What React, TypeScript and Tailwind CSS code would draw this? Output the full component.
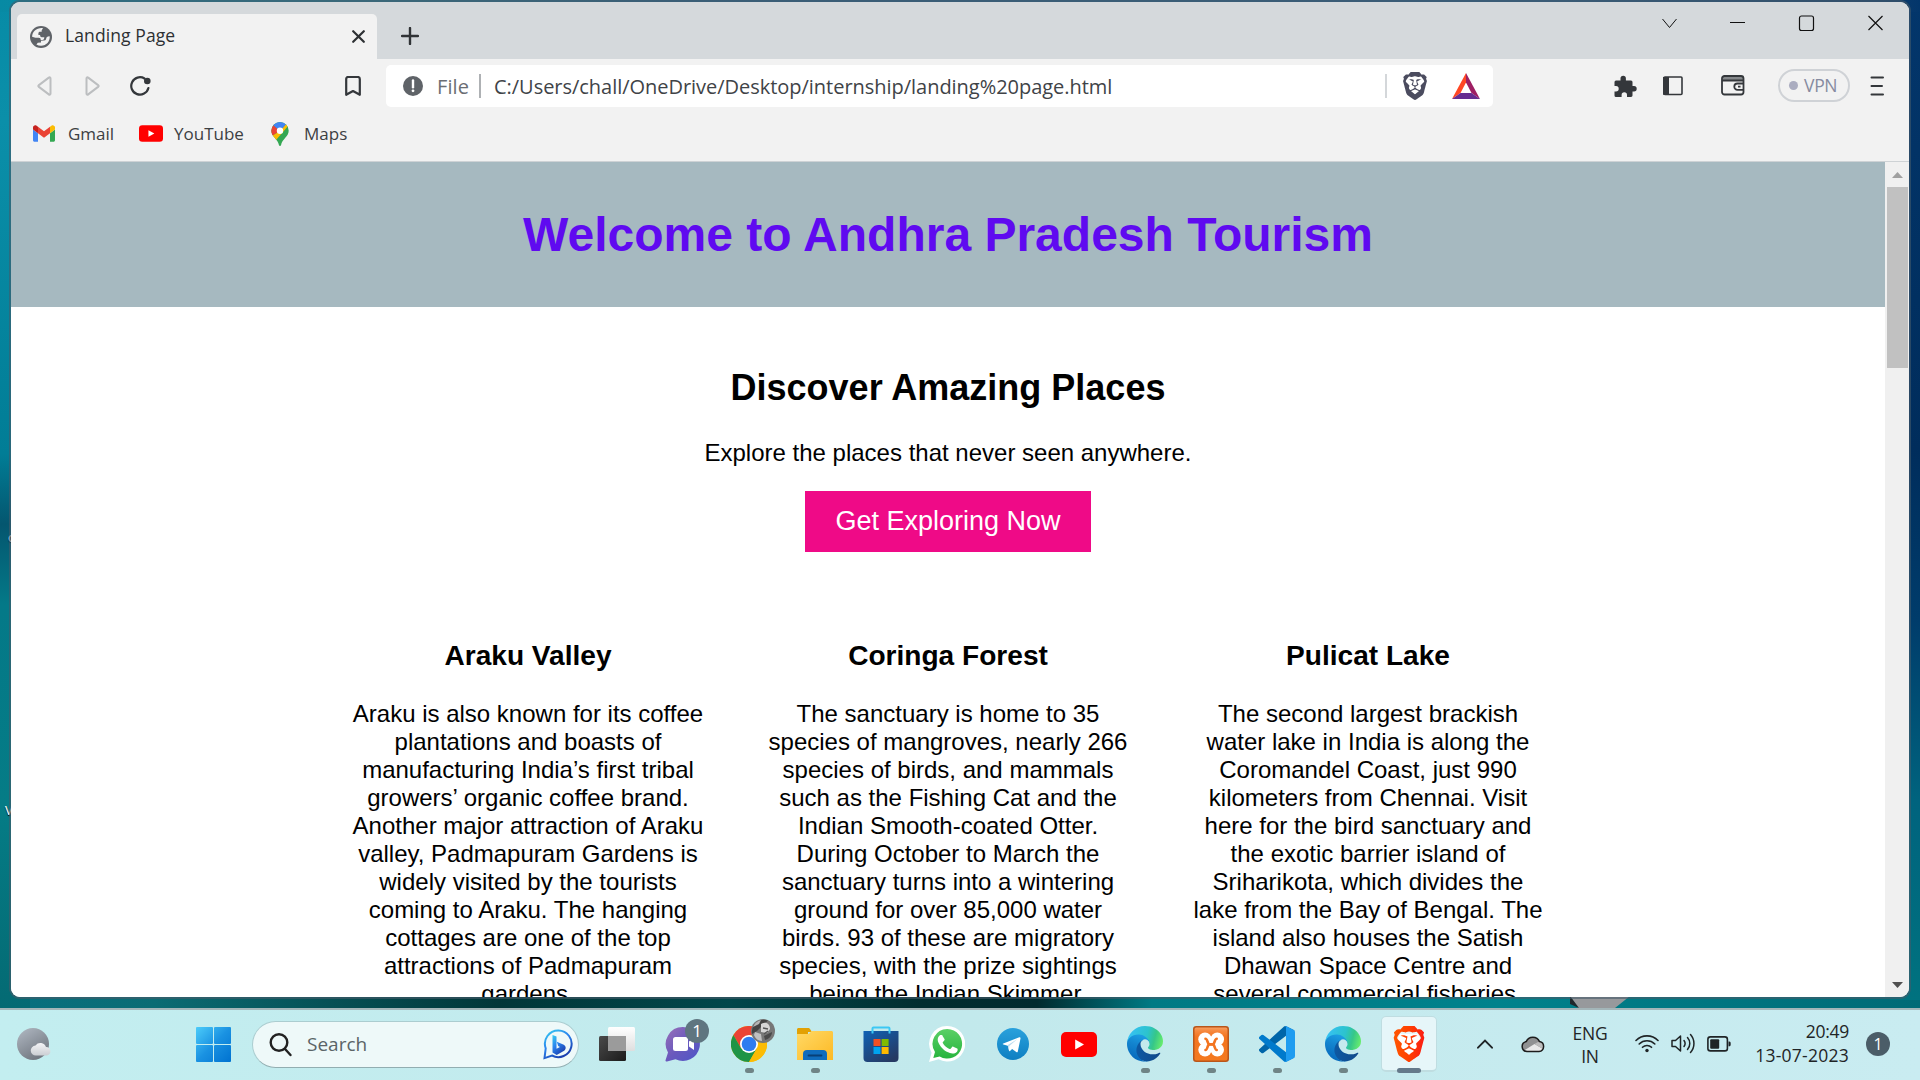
import React from "react";
import { SiBrave } from "react-icons/si";

const ui = "font-['Open_Sans','Noto_Sans',sans-serif]";

function Globe() {
  return (
    <svg width="22" height="22" viewBox="0 0 22 22">
      <circle cx="11" cy="11" r="11" fill="#5f6368" />
      <path d="M13 2.200C7 1.500 2.200 5.500 2.100 10.800l3.400 1h3.200c1.600 0 2 .8 2 2.200h1.600c1.500 0 2-1.200 2-2.700h-2.600c-1.200 0-1.600-.9-1.600-2.200H8.400V7.400c0-1 .6-1.700 1.700-1.700h1.600V4.200z" fill="#f2f2f2" />
      <path d="M19.700 10.200c.5 5-3.400 9.500-8.600 9.600-1.800 0-3.300-.4-4.700-1.200l1.400-1.900 3.200-.2v-1.800l3.300-.3c1.600-.2 2-1.200 2-2.700l1.500-1.200z" fill="#f2f2f2" />
    </svg>
  );
}

function Bat() {
  return (
    <svg width="28" height="26" viewBox="0 0 28 26">
      <path d="M14 0v9.500L8.500 20 0 26z" fill="#ff4724" />
      <path d="M14 0l14 26-8.500-6L14 9.500z" fill="#9e1f63" />
      <path d="M0 26l8.500-6h11l8.500 6z" fill="#662d91" />
    </svg>
  );
}

function Gmail() {
  return (
    <svg width="22" height="17" viewBox="52 42 88 66">
      <path fill="#4285f4" d="M58 108h14V74L52 59v43c0 3.320 2.690 6 6 6" />
      <path fill="#34a853" d="M120 108h14c3.320 0 6-2.690 6-6V59l-20 15" />
      <path fill="#fbbc04" d="M120 48v26l20-15v-8c0-7.420-8.470-11.650-14.400-7.200" />
      <path fill="#ea4335" d="M72 74V48l24 18 24-18v26L96 92" />
      <path fill="#c5221f" d="M52 51v8l20 15V48l-5.600-4.200c-5.940-4.450-14.400-.220-14.400 7.200" />
    </svg>
  );
}

function YouTube({ w, h }: { w: number; h: number }) {
  return (
    <svg width={w} height={h} viewBox="0 0 36 25">
      <rect width="36" height="25" rx="5" fill="#f00" />
      <path d="M14.200 7.500v10l8.800-5z" fill="#fff" />
    </svg>
  );
}

function MapsPin() {
  return (
    <svg width="18" height="24" viewBox="0 0 18 24">
      <defs>
        <clipPath id="pin">
          <path d="M9 0a8.700 8.700 0 0 1 8.700 8.700c0 6-6.500 8-7.700 14.500-.2 1-1.800 1-2 0C6.800 16.700.3 14.700.3 8.700A8.700 8.700 0 0 1 9 0z" />
        </clipPath>
      </defs>
      <g clipPath="url(#pin)">
        <rect width="18" height="24" fill="#34a853" />
        <path d="M9 9L2.500 3-2 10l3 4z" fill="#ea4335" />
        <path d="M9 9L1 14l3.200 5L17.500 3.500 15 2z" fill="#fbbc04" />
        <path d="M9 9l8-9H6L2 3z" fill="#4285f4" />
      </g>
      <circle cx="9" cy="8.700" r="3.200" fill="#fff" />
    </svg>
  );
}

function Edge({ id }: { id: string }) {
  return (
    <svg width="36" height="36" viewBox="0 0 256 256">
      <defs>
        <linearGradient id={id + "a"} x1="60" y1="180" x2="230" y2="180" gradientUnits="userSpaceOnUse">
          <stop offset="0" stopColor="#0c59a4" />
          <stop offset="1" stopColor="#114a8b" />
        </linearGradient>
        <linearGradient id={id + "b"} x1="110" y1="70" x2="50" y2="240" gradientUnits="userSpaceOnUse">
          <stop offset="0" stopColor="#1b9de2" />
          <stop offset=".4" stopColor="#1384cf" />
          <stop offset="1" stopColor="#0669bc" />
        </linearGradient>
        <linearGradient id={id + "c"} x1="20" y1="60" x2="250" y2="120" gradientUnits="userSpaceOnUse">
          <stop offset="0" stopColor="#35c1f1" />
          <stop offset=".5" stopColor="#2cc3cd" />
          <stop offset=".75" stopColor="#36c788" />
          <stop offset="1" stopColor="#66eb6e" />
        </linearGradient>
      </defs>
      <path fill={"url(#" + id + "a)"} d="M230.600 190.500c-3.400 1.800-6.900 3.400-10.500 4.700a101.900 101.900 0 0 1-35.800 6.400c-47.200 0-88.300-32.500-88.300-74.100 0-11.900 6.500-22.900 16.800-28.600-42.700 1.800-53.700 46.300-53.700 72.400 0 73.900 68 81.300 82.700 81.300 7.900 0 19.800-2.300 27-4.600l1.300-.4a128.300 128.300 0 0 0 66.600-52.800 4 4 0 0 0-6.100-4.300z" />
      <path fill={"url(#" + id + "b)"} d="M105.700 241.400a79.200 79.200 0 0 1-22.700-21.300 80.700 80.700 0 0 1 29.800-121.300c3.100-1.500 8.500-4.100 15.600-4a32.400 32.400 0 0 1 25.700 13 31.900 31.900 0 0 1 6.300 18.700c0-.2 24.500-79.700-80-79.700C36.500 46.800 0 88.500 0 125c-.2 19.300 4 38.500 12.200 56a128 128 0 0 0 156.400 67.100 75.500 75.500 0 0 1-62.800-6.600z" />
      <path fill={"url(#" + id + "c)"} d="M152.300 148.900c-.8 1-3.300 2.500-3.300 5.700 0 2.600 1.700 5.100 4.700 7.200 14.400 10 41.500 8.600 41.500 8.600 10.700 0 21.200-2.900 30.300-8.300A61.400 61.400 0 0 0 256 109.200c.3-22.400-8-37.300-11.300-43.900C223.500 23.900 177.700 0 128 0A128 128 0 0 0 0 126.200c.5-36.500 36.800-66 80-66 3.500 0 23.500.3 42 10.100 16.300 8.500 24.900 18.900 30.800 29.200 6.200 10.700 7.300 24.100 7.300 29.500 0 5.300-2.700 13.300-7.800 19.900z" />
    </svg>
  );
}

function TaskView() {
  return (
    <svg width="36" height="36" viewBox="0 0 36 36">
      <defs>
        <linearGradient id="tv1" x2="1" y2="1"><stop stopColor="#4a4a4a" /><stop offset="1" stopColor="#1b1b1b" /></linearGradient>
        <linearGradient id="tv2" y2="1" x2="0"><stop stopColor="#fff" /><stop offset="1" stopColor="#dedede" /></linearGradient>
      </defs>
      <rect x="0" y="10" width="27" height="25" rx="1.500" fill="url(#tv1)" />
      <rect x="9" y="1" width="27" height="24" rx="1.500" fill="url(#tv2)" />
      <rect x="9" y="10" width="18" height="15" fill="#9b9b9b" />
    </svg>
  );
}

function Chat() {
  return (
    <svg width="36" height="36" viewBox="0 0 36 36">
      <defs><linearGradient id="chat" x2="1" y2="1"><stop stopColor="#9a70b8" /><stop offset=".5" stopColor="#6a59bd" /><stop offset="1" stopColor="#4d55c8" /></linearGradient></defs>
      <path d="M18 1a17 17 0 1 1-7.500 32.300L2 35.500c-1 .2-1.800-.6-1.400-1.600L3 26.500A17 17 0 0 1 18 1z" fill="url(#chat)" />
      <rect x="8" y="11" width="15" height="14" rx="2.500" fill="#fff" />
      <path d="M24 15.500l5-3.500v12l-5-3.500z" fill="#fff" />
    </svg>
  );
}

function Chrome() {
  return (
    <svg width="36" height="36" viewBox="0 0 36 36">
      <circle cx="18" cy="18" r="18" fill="#fbbc05" />
      <path d="M18 18L33.600 9A18 18 0 0 0 2.400 9l7.800 13.500z" fill="#ea4335" />
      <path d="M2.400 9A18 18 0 0 0 18 36l7.800-13.500H10.200z" fill="#1e9446" />
      <path d="M18 9h15.600A18 18 0 0 1 18 36l7.800-13.500z" fill="#fbbc05" />
      <circle cx="18" cy="18" r="9" fill="#fff" />
      <circle cx="18" cy="18" r="7.300" fill="#2e7cf0" />
    </svg>
  );
}

function Folder() {
  return (
    <svg width="36" height="34" viewBox="0 0 36 34">
      <defs><linearGradient id="fold" x2="1" y2="1"><stop stopColor="#ffd966" /><stop offset="1" stopColor="#fdb924" /></linearGradient></defs>
      <path d="M0 2.500C0 1.700.7 1 1.500 1H11c1 0 1.500.4 2 1l2 3h-4v6H0z" fill="#e2a105" />
      <path d="M0 7h10.500c1 0 1.500-.3 2-.8L14.500 4h20c.8 0 1.500.7 1.500 1.500V33H0z" fill="url(#fold)" />
      <path d="M6 33v-6a4 4 0 0 1 4-4h16a4 4 0 0 1 4 4v6z" fill="#0f6cbd" />
      <path d="M11.500 28.500h13" stroke="#083f77" strokeWidth="1.800" strokeLinecap="round" />
    </svg>
  );
}

function Store() {
  return (
    <svg width="36" height="36" viewBox="0 0 36 36">
      <defs><linearGradient id="store" x2=".7" y2="1"><stop stopColor="#0f62b5" /><stop offset="1" stopColor="#263a63" /></linearGradient></defs>
      <path d="M.5 5H35.500v27a4 4 0 0 1-4 4h-27a4 4 0 0 1-4-4z" fill="url(#store)" />
      <path d="M9.500 7.500V2.500a1 1 0 0 1 1-1h15a1 1 0 0 1 1 1v5" fill="none" stroke="#3cc8f4" strokeWidth="2" />
      <rect x="10.500" y="13" width="7" height="7" fill="#f25022" />
      <rect x="18.600" y="13" width="7" height="7" fill="#7fba00" />
      <rect x="10.500" y="21" width="7" height="7" fill="#00a4ef" />
      <rect x="18.600" y="21" width="7" height="7" fill="#ffb900" />
    </svg>
  );
}

function WhatsApp() {
  return (
    <svg width="36" height="36" viewBox="0 0 36 36">
      <defs><linearGradient id="wa" x2="0" y2="1"><stop stopColor="#5bd066" /><stop offset="1" stopColor="#27b43e" /></linearGradient></defs>
      <path d="M18.200 0A17.800 17.800 0 1 1 9.600 33.300L0 36l2.600-9.300A17.800 17.800 0 0 1 18.200 0z" fill="#fff" />
      <path d="M18.200 3A14.800 14.800 0 1 1 10.700 30.500L4.300 32.100 6 25.900A14.800 14.800 0 0 1 18.200 3z" fill="url(#wa)" />
      <path d="M13.600 9.900c-.3-.8-.7-.8-1-.8h-.9c-.3 0-.9.100-1.300.6-.5.500-1.700 1.700-1.700 4.100s1.800 4.800 2 5.100c.2.3 3.400 5.400 8.400 7.400 4.100 1.600 5 1.300 5.900 1.200.9-.1 2.900-1.200 3.300-2.300.4-1.100.4-2.100.3-2.300-.1-.2-.5-.3-1-.6l-3.300-1.600c-.5-.2-.8-.2-1.200.2l-1.500 1.900c-.3.3-.6.4-1 .1-.5-.2-2.100-.8-4-2.500-1.500-1.300-2.500-2.900-2.800-3.400-.3-.5 0-.8.200-1l1.600-1.900c.1-.3.100-.6 0-.9z" fill="#fff" />
    </svg>
  );
}

function Telegram() {
  return (
    <svg width="32" height="32" viewBox="0 0 32 32">
      <defs><linearGradient id="tg" x2="0" y2="1"><stop stopColor="#2aa1dc" /><stop offset="1" stopColor="#0e7fc2" /></linearGradient></defs>
      <circle cx="16" cy="16" r="16" fill="url(#tg)" />
      <path d="M6.300 15.600l16-6.300c.8-.3 1.400.2 1.200 1.200l-2.700 12.900c-.2.900-.8 1.200-1.500.7l-4.200-3.100-2.100 2c-.4.400-.8.200-.9-.2l-1.300-5-4.400-1.300c-.9-.3-.9-.7-.1-.9z" fill="#fff" />
      <path d="M12 22.700l.3-4.600 8.200-7.200-9.700 6.200z" fill="#bcdcf0" />
    </svg>
  );
}

function Xampp() {
  return (
    <svg width="36" height="36" viewBox="0 0 36 36">
      <defs><linearGradient id="xa" x2="0" y2="1"><stop stopColor="#f9a468" /><stop offset=".12" stopColor="#f6883e" /><stop offset=".3" stopColor="#f3741f" /><stop offset="1" stopColor="#f47a20" /></linearGradient></defs>
      <rect x=".75" y=".75" width="34.500" height="34.500" rx="2.500" fill="url(#xa)" stroke="#b9561b" strokeWidth="1.500" />
      <g fill="#fff">
        <circle cx="12" cy="13.300" r="6.700" />
        <circle cx="24.300" cy="13.300" r="6.700" />
        <circle cx="12" cy="23.700" r="6.700" />
        <circle cx="24.300" cy="23.700" r="6.700" />
        <rect x="10" y="13" width="16.500" height="11" />
      </g>
      <g fill="none" stroke="#f3741f" strokeWidth="2.600" strokeLinecap="round">
        <path d="M12.500 12.800c2.200 0 1.800 5.400 4 5.400h3.200c2.200 0 1.800-5.400 4-5.400" />
        <path d="M12.500 24c2.200 0 1.800-5.600 4-5.600h3.200c2.200 0 1.800 5.600 4 5.600" />
      </g>
    </svg>
  );
}

function VSCode() {
  return (
    <svg width="36" height="36" viewBox="0 0 100 100">
      <path d="M96.500 10.800L75.900.9a6.200 6.200 0 0 0-7.100 1.200L1.300 63.600a4.200 4.200 0 0 0 0 6.200l5.500 5a4.200 4.200 0 0 0 5.300.2L93.400 13.400c2.700-2.100 6.600-.1 6.600 3.300v-.3a6.200 6.200 0 0 0-3.500-5.600z" fill="#0065a9" />
      <path d="M96.500 89.200l-20.600 9.900a6.200 6.200 0 0 1-7.100-1.200L1.300 36.400a4.200 4.200 0 0 1 0-6.200l5.500-5a4.200 4.200 0 0 1 5.300-.2l81.300 61.600c2.700 2.100 6.600.1 6.600-3.300v.3a6.200 6.200 0 0 1-3.500 5.600z" fill="#007acc" />
      <path d="M75.900 99.100a6.200 6.200 0 0 1-7.100-1.200c2.300 2.300 6.200.7 6.200-2.600V4.700c0-3.300-3.900-4.900-6.200-2.600A6.200 6.200 0 0 1 75.900.9l20.600 9.900a6.200 6.200 0 0 1 3.500 5.600v67.200a6.200 6.200 0 0 1-3.500 5.600z" fill="#1f9cf0" />
    </svg>
  );
}

function Cell({ children, dot }: { children: React.ReactNode; dot?: boolean }) {
  return (
    <div className="relative flex h-[68px] w-[66px] items-center justify-center">
      {children}
      {dot && <span className="absolute bottom-[5px] left-[29px] h-[5px] w-[9px] rounded-full bg-[#6f8486]" />}
    </div>
  );
}

function TitleBar() {
  return (
    <div className="flex h-[57px] bg-[#d5d9dc]">
      <div className="mt-[12px] ml-[6px] flex h-[45px] w-[360px] items-center rounded-t-[5px] bg-[#f2f2f2] pr-[12px] pl-[13px]">
        <Globe />
        <span className={`ml-[13px] flex-1 pb-[2px] text-[17.500px] font-medium whitespace-nowrap text-[#2d3033] ${ui} tracking-[0.1px]`}>Landing Page</span>
        <svg width="13" height="13" viewBox="0 0 13 13" stroke="#2d3033" strokeWidth="2.200" strokeLinecap="round"><path d="M1.200 1.200l10.600 10.600M11.800 1.200L1.200 11.800" /></svg>
      </div>
      <svg className="mt-[25px] ml-[24px]" width="18" height="18" viewBox="0 0 18 18" stroke="#303336" strokeWidth="2.400" strokeLinecap="round"><path d="M9 1v16M1 9h16" /></svg>
      <div className="flex-1" />
      <svg className="mt-[12px] mr-[26px]" width="222" height="18" viewBox="0 0 222 18" fill="none" stroke="#111" strokeWidth="1.200">
        <path d="M1.500 5l7 8.500 7-8.500" strokeWidth="1" />
        <path d="M69 8.500h15" strokeWidth="1" />
        <rect x="138.500" y="2" width="14" height="14.500" rx="2" />
        <path d="M207.500 2l14 14M221.500 2l-14 14" />
      </svg>
    </div>
  );
}

function Toolbar() {
  return (
    <div className="flex h-[54px] items-center">
      <svg className="ml-[26px]" width="15" height="20" viewBox="0 0 15 20" fill="none" stroke="#bcbec0" strokeWidth="2" strokeLinejoin="round"><path d="M13.500 2.500v15c0 1-1 1.500-1.700.9L1.600 10.600a.8.800 0 0 1 0-1.200l10.200-7.800c.7-.6 1.700-.1 1.700.9z" /></svg>
      <svg className="ml-[33px]" width="15" height="20" viewBox="0 0 15 20" fill="none" stroke="#bcbec0" strokeWidth="2" strokeLinejoin="round"><path d="M1.500 2.500v15c0 1 1 1.500 1.700.9l10.200-7.800a.8.800 0 0 0 0-1.200L3.200 1.600c-.7-.6-1.700-.1-1.700.9z" /></svg>
      <svg className="ml-[30px]" width="21" height="20" viewBox="0 0 21 20" fill="none" stroke="#34373b" strokeWidth="2.200" strokeLinecap="round"><path d="M14.500 2.500A8.700 8.700 0 1 0 18.400 12" /><circle cx="17.300" cy="5" r="3.300" fill="#34373b" stroke="none" /></svg>
      <svg className="ml-[194px]" width="16" height="20" viewBox="0 0 16 20" fill="none" stroke="#34373b" strokeWidth="2.200" strokeLinejoin="round"><path d="M1.200 3a2 2 0 0 1 2-2h9.600a2 2 0 0 1 2 2v15.800L8 15l-6.800 3.800z" /></svg>
      <div className="ml-[25px] flex h-[42px] w-[1107px] items-center rounded-[5px] bg-white">
        <svg className="ml-[17px]" width="20" height="20" viewBox="0 0 20 20"><circle cx="10" cy="10" r="10" fill="#5f6368" /><path d="M10 4.500v6.800" stroke="#fff" strokeWidth="2.400" strokeLinecap="round" /><circle cx="10" cy="14.800" r="1.400" fill="#fff" /></svg>
        <span className={`ml-[14px] w-[42px] pt-px text-[20px] text-[#6b6e73] ${ui} tracking-[0.1px]`}>File</span>
        <span className="h-[24px] w-[2px] bg-[#aeb1b4]" />
        <span className={`ml-[13px] w-[891px] pt-px text-[20px] whitespace-nowrap text-[#404347] ${ui} tracking-[-0.03px]`}>C:/Users/chall/OneDrive/Desktop/internship/landing%20page.html</span>
        <span className="h-[24px] w-[2px] bg-[#d4d7da]" />
        <SiBrave className="ml-[14px] h-[28px] w-[28px] text-[#4b4c5f]" />
        <span className="ml-[23px]"><Bat /></span>
      </div>
      <div className="flex items-center pb-[1px]">
        <svg className="ml-[121px]" width="23" height="22" viewBox="0 0 23 22" fill="#34373b"><path d="M2 5.500h4.500V3.500a2.700 2.700 0 0 1 5.400 0v2H17a1.500 1.500 0 0 1 1.500 1.500v4H20a2.700 2.700 0 0 1 0 5.400h-1.500v4A1.500 1.500 0 0 1 17 22h-4v-2a2.700 2.700 0 0 0-5.400 0v2H2A1.500 1.500 0 0 1 .5 20.500V16.500H2a2.700 2.700 0 0 0 0-5.400H.5V7A1.500 1.500 0 0 1 2 5.500z" /></svg>
        <svg className="ml-[26px]" width="20" height="20" viewBox="0 0 20 20"><rect x="1" y="1" width="18" height="17.500" rx="1" fill="none" stroke="#34373b" strokeWidth="1.600" /><path d="M0 1h6v18H1a1 1 0 0 1-1-1z" fill="#34373b" /></svg>
        <svg className="ml-[38px]" width="24" height="21" viewBox="0 0 24 21" fill="none" stroke="#34373b" strokeWidth="1.800"><path d="M2 3.500h20" stroke="#85888b" strokeWidth="3" /><rect x="1" y="1" width="21.500" height="18.500" rx="2.500" /><path d="M1 5.500h21M23 8.500h-6.500a3.200 3.200 0 0 0 0 6.400H23M17 11.700h2.500" /></svg>
        <div className={`ml-[33px] flex h-[33px] w-[72px] items-center justify-center gap-[6px] rounded-full border-2 border-[#cfd2d6] ${ui}`}>
          <span className="h-[9px] w-[9px] rounded-full bg-[#abadc0]" />
          <span className="w-[35px] text-[17.500px] leading-none tracking-[-0.3px] text-[#868ba0]">VPN</span>
        </div>
        <svg className="ml-[20px]" width="14" height="20" viewBox="0 0 14 20" stroke="#34373b" strokeWidth="2" strokeLinecap="round"><path d="M1.500 1.500h11.500M1.500 10h10.500M1.500 18.500h11.500" /></svg>
      </div>
    </div>
  );
}

function Bookmarks() {
  const label = `text-[17px] whitespace-nowrap text-[#3c4043] ${ui}`;
  return (
    <div className="flex h-[49px] items-center border-b border-[#ced2d5] pb-[7px] pl-[22px]">
      <Gmail />
      <span className={`ml-[13px] w-[71px] ${label}`}>Gmail</span>
      <YouTube w={24} h={17} />
      <span className={`ml-[11px] w-[97px] ${label}`}>YouTube</span>
      <MapsPin />
      <span className={`ml-[15px] ${label}`}>Maps</span>
    </div>
  );
}

const places = [
  {
    name: "Araku Valley",
    text: "Araku is also known for its coffee plantations and boasts of manufacturing India’s first tribal growers’ organic coffee brand. Another major attraction of Araku valley, Padmapuram Gardens is widely visited by the tourists coming to Araku. The hanging cottages are one of the top attractions of Padmapuram gardens.",
  },
  {
    name: "Coringa Forest",
    text: "The sanctuary is home to 35 species of mangroves, nearly 266 species of birds, and mammals such as the Fishing Cat and the Indian Smooth-coated Otter. During October to March the sanctuary turns into a wintering ground for over 85,000 water birds. 93 of these are migratory species, with the prize sightings being the Indian Skimmer,",
  },
  {
    name: "Pulicat Lake",
    text: "The second largest brackish water lake in India is along the Coromandel Coast, just 990 kilometers from Chennai. Visit here for the bird sanctuary and the exotic barrier island of Sriharikota, which divides the lake from the Bay of Bengal. The island also houses the Satish Dhawan Space Centre and several commercial fisheries.",
  },
];

function LandingPage() {
  return (
    <div className="h-full w-[1874px] overflow-hidden bg-white text-center font-['Liberation_Sans',Arial,sans-serif] text-black">
      <header className="h-[145px] bg-[#a6b9c0] pt-[45px]">
        <h1 className="text-[48px] leading-[55px] font-bold text-[#5f0af0]">Welcome to Andhra Pradesh Tourism</h1>
      </header>
      <h2 className="mt-[60px] text-[36px] leading-[41px] font-bold">Discover Amazing Places</h2>
      <p className="mt-[31px] text-[24px] leading-[28px]">Explore the places that never seen anywhere.</p>
      <button className="mx-auto mt-[24px] block h-[61px] w-[286px] bg-[#ef0a87] text-[27px] leading-[31px] text-white">Get Exploring Now</button>
      <div className="mx-auto mt-[87px] flex w-[1200px] justify-between">
        {places.map((p) => (
          <section key={p.name} className="w-[360px]">
            <h3 className="text-[28.08px] leading-[33px] font-bold">{p.name}</h3>
            <p className="mt-[28px] text-[24px] leading-[28px]">{p.text}</p>
          </section>
        ))}
      </div>
    </div>
  );
}

function Scrollbar() {
  return (
    <div className="flex w-[24px] flex-col bg-[#f0f0f0]">
      <svg className="mt-[10px] ml-[7px]" width="11" height="6" viewBox="0 0 11 6"><path d="M5.500 0L11 6H0z" fill="#a0a0a0" /></svg>
      <div className="mt-[9px] ml-[2px] h-[181px] w-[21px] bg-[#c1c1c1]" />
      <div className="flex-1" />
      <svg className="mb-[9px] ml-[7px]" width="11" height="6" viewBox="0 0 11 6"><path d="M5.500 6L11 0H0z" fill="#505050" /></svg>
    </div>
  );
}

function Taskbar() {
  return (
    <div className={`flex h-[72px] border-t-2 border-[#a3b6b9] bg-gradient-to-r from-[#c3eef0] via-[#c2e9ec] to-[#c9ecf1] text-[#1f2426] ${ui}`}>
      <svg className="mt-[18px] ml-[17px]" width="35" height="33" viewBox="0 0 35 33">
        <defs>
          <linearGradient id="moon" x2=".6" y2="1"><stop stopColor="#b2bac4" /><stop offset="1" stopColor="#717780" /></linearGradient>
          <linearGradient id="wc" x2="0" y2="1"><stop stopColor="#f4f4f6" /><stop offset="1" stopColor="#cbced3" /></linearGradient>
        </defs>
        <circle cx="16" cy="16" r="16" fill="url(#moon)" />
        <path d="M19 27.500a5 5 0 0 1-.5-10 6 6 0 0 1 10.500 1.500 4.300 4.300 0 0 1 1 8.500z" fill="url(#wc)" />
      </svg>
      <svg className="mt-[17px] ml-[144px]" width="35" height="35" viewBox="0 0 35 35">
        <defs><linearGradient id="win" x1="0" y1="0" x2="35" y2="35" gradientUnits="userSpaceOnUse"><stop stopColor="#4cccfa" /><stop offset=".5" stopColor="#1a92e2" /><stop offset="1" stopColor="#0072d0" /></linearGradient></defs>
        <g fill="url(#win)"><rect width="17" height="17" rx="1" /><rect x="18" width="17" height="17" rx="1" /><rect y="18" width="17" height="17" rx="1" /><rect x="18" y="18" width="17" height="17" rx="1" /></g>
      </svg>
      <div className="mt-[11px] ml-[21px] flex h-[47px] w-[327px] items-center rounded-full border border-[#abcdd0] border-b-[#92aeb1] bg-[#eef9f9]">
        <svg className="ml-[16px]" width="24" height="26" viewBox="0 0 24 26" fill="none" stroke="#222" strokeWidth="2.400" strokeLinecap="round"><circle cx="10" cy="10.500" r="8.300" /><path d="M15.800 16.800l5.700 6.200" /></svg>
        <span className="ml-[14px] flex-1 text-[19px] text-[#5b6467]">Search</span>
        <svg className="mr-[5px]" width="30" height="31" viewBox="0 0 30 31">
          <defs><linearGradient id="bing" x2=".6" y2="1"><stop stopColor="#35cdf0" /><stop offset=".5" stopColor="#2a83ee" /><stop offset="1" stopColor="#1b3fae" /></linearGradient></defs>
          <path d="M15.500 1.500a13.300 13.300 0 1 1-6.500 25l-7.500 2.600 1.200-9.800A13.300 13.300 0 0 1 15.500 1.500z" fill="none" stroke="url(#bing)" strokeWidth="2" />
          <path d="M9.500 6l4 1.500v12.300l3.500-1.800-1.800-.9-1.400-4.300 7 2.900c2.700 1.700 2.200 4.800.3 6.100l-7.400 4.200-4.200-2.500z" fill="url(#bing)" />
        </svg>
      </div>
      <div className="ml-[5px] flex">
        <Cell><TaskView /></Cell>
        <Cell>
          <Chat />
          <span className="absolute top-[9px] left-[35px] flex h-[24px] w-[24px] items-center justify-center rounded-full bg-[#5f7580] text-[17px] text-white">1</span>
        </Cell>
        <Cell dot>
          <Chrome />
          <svg className="absolute top-[9px] left-[35px]" width="24" height="24" viewBox="0 0 24 24">
            <circle cx="12" cy="12" r="12" fill="#777" />
            <path d="M3 6a12 12 0 0 1 14-4.500L12 6 6 12 1 15A12 12 0 0 1 3 6z" fill="#444" />
            <path d="M2 8a11 11 0 0 1 8-7L8 5z" fill="#b5b5b5" />
            <path d="M10 5c5-3 9 0 9 5l-3 4-6-1z" fill="#d6d6d6" />
            <path d="M12 9l5 1M13 15l4-3" stroke="#555" strokeWidth="1.300" />
            <path d="M4 13l6 2 1 7c-4 0-7-3-8-6z" fill="#c0c0c0" />
            <path d="M13 17l8-4c0 4-3 7-7 8z" fill="#4a4a4a" />
          </svg>
        </Cell>
        <Cell dot><Folder /></Cell>
        <Cell><Store /></Cell>
        <Cell><WhatsApp /></Cell>
        <Cell><Telegram /></Cell>
        <Cell><YouTube w={36} h={25} /></Cell>
        <Cell dot><Edge id="e1" /></Cell>
        <Cell dot><Xampp /></Cell>
        <Cell dot><VSCode /></Cell>
        <Cell dot><Edge id="e2" /></Cell>
        <Cell>
          <div className="flex h-[56px] w-[56px] items-center justify-center rounded-[5px] border border-b-2 border-[#bfdde1] bg-[#e6f6f9]">
            <div className="relative h-[36px] w-[36px]">
              <svg className="absolute inset-0" width="36" height="36" viewBox="0 0 36 36"><path d="M9 8h18l3 7-4 13-8 6-8-6-4-13z" fill="#fff" /></svg>
              <svg className="absolute inset-0" width="0" height="0"><defs><linearGradient id="brv" x2="1" y2="0"><stop stopColor="#ff5601" /><stop offset=".5" stopColor="#ff4000" /><stop offset="1" stopColor="#fb1c14" /></linearGradient></defs></svg>
              <SiBrave className="relative h-[36px] w-[36px] fill-[url(#brv)]" />
            </div>
          </div>
          <span className="absolute bottom-[5px] left-[21px] h-[5px] w-[24px] rounded-full bg-[#64798a]" />
        </Cell>
      </div>
      <svg className="mt-[29px] ml-[35px]" width="16" height="10" viewBox="0 0 16 10" fill="none" stroke="#1f2426" strokeWidth="1.900" strokeLinecap="round"><path d="M1 8.700L8 1.500l7 7.200" /></svg>
      <svg className="mt-[25px] ml-[28px]" width="24" height="18" viewBox="0 0 24 18">
        <path d="M6 16.500a5 5 0 0 1-.8-9.900 7.200 7.200 0 0 1 13.300 0A5 5 0 0 1 18 16.500z" fill="#909192" />
        <path d="M3 15.500L13.500 9l8.500 5c-1 2-2.500 2.500-4 2.500H6z" fill="#e9e9e9" />
        <path d="M13.500 9l4.500-2.500c4 0 5.500 4 4 7.500z" fill="#bdbdbd" />
        <path d="M6 16.500a5 5 0 0 1-.8-9.900 7.200 7.200 0 0 1 13.300 0A5 5 0 0 1 18 16.500z" fill="none" stroke="#1c1c1c" strokeWidth="1.500" />
      </svg>
      <div className="mt-[12px] ml-[23px] w-[44px] text-center text-[17.500px] leading-[23px] tracking-[-0.2px]">ENG<br />IN</div>
      <svg className="mt-[24px] ml-[23px]" width="24" height="19" viewBox="0 0 24 19" fill="none" stroke="#1f2426" strokeWidth="1.600" strokeLinecap="round"><path d="M1 6.500a15.500 15.500 0 0 1 22 0M4.200 10a11 11 0 0 1 15.600 0M7.500 13.300a6.400 6.400 0 0 1 9 0" /><circle cx="12" cy="16.500" r="1.700" fill="#1f2426" stroke="none" /></svg>
      <svg className="mt-[23px] ml-[12px]" width="24" height="21" viewBox="0 0 24 21" fill="none" stroke="#1f2426" strokeWidth="1.500" strokeLinecap="round" strokeLinejoin="round"><path d="M1 7.500h3.500L9.500 3v15l-5-4.500H1zM13 7.500a5 5 0 0 1 0 6M16.500 4.500a9 9 0 0 1 0 12M19.500 1.500a13.500 13.500 0 0 1 0 18" /></svg>
      <svg className="mt-[26px] ml-[12px]" width="24" height="16" viewBox="0 0 24 16"><rect x=".9" y=".9" width="19.500" height="14" rx="2.500" fill="none" stroke="#1f2426" strokeWidth="1.600" /><rect x="3.200" y="3.200" width="9" height="9.500" rx="1" fill="#1f2426" /><path d="M21.500 5.500h.8c1 0 1.400.8 1.400 2.400s-.4 2.400-1.400 2.400h-.8z" fill="#1f2426" /></svg>
      <div className="mt-[9px] flex w-[118px] flex-col items-end text-[17.500px] leading-[24px]">
        <span className="tracking-[-0.25px]">20:49</span>
        <span className="tracking-[0.25px]">13-07-2023</span>
      </div>
      <span className="mt-[22px] ml-[17px] flex h-[24px] w-[24px] items-center justify-center rounded-full bg-[#4b5d68] text-[16px] text-white">1</span>
    </div>
  );
}

export default function App() {
  return (
    <div className="h-[1080px] w-[1920px] overflow-hidden">
      <div className="relative flex h-[1008px] flex-col bg-[#00707f] bg-[linear-gradient(to_right,#067080_0%,#0b6c74_8%,#013638_26%,#02474b_38%,#012d30_48%,#012a2e_54%,#007a84_60%,#00828c_78%,#006a76_100%)]">
        <div className="absolute inset-y-0 left-0 w-[30px] bg-[linear-gradient(to_bottom,#078ba6_0%,#0b8fa9_12%,#017d96_45%,#04566f_52%,#047988_60%,#057c86_80%,#046a73_100%)]" />
        <div className="absolute top-0 right-0 h-[1000px] w-[30px] bg-[linear-gradient(to_bottom,#03366b_0%,#002d5c_45%,#003c6b_62%,#00637e_80%,#00727f_100%)]" />
        <div className="absolute inset-x-0 top-0 h-[12px] bg-[linear-gradient(to_right,#078aa4_0%,#2c7d92_20%,#2a6489_35%,#2a5f8a_80%,#13406f_97%,#03366b_100%)]" />
        <svg className="absolute top-[996px] left-[1568px]" width="64" height="12" viewBox="0 0 64 12"><path d="M2 0h60L47 12H10z" fill="#97999c" /><path d="M2 0l9 12-9-4z" fill="#20282c" /></svg>
        <span className="absolute top-[527px] left-[8px] text-[13px] leading-[20px] text-white [text-shadow:0_1px_1px_#000]">c</span>
        <span className="absolute top-[800px] left-[5px] text-[13px] leading-[20px] text-white [text-shadow:0_1px_1px_#000]">V</span>
        <div className="relative mt-[2px] ml-[11px] flex h-[995px] w-[1898px] flex-col overflow-hidden rounded-[9px] bg-[#f2f2f2] shadow-[0_0_0_2px_rgba(70,90,105,0.6)]">
          <TitleBar />
          <Toolbar />
          <Bookmarks />
          <div className="flex min-h-0 flex-1">
            <LandingPage />
            <Scrollbar />
          </div>
        </div>
      </div>
      <Taskbar />
    </div>
  );
}
